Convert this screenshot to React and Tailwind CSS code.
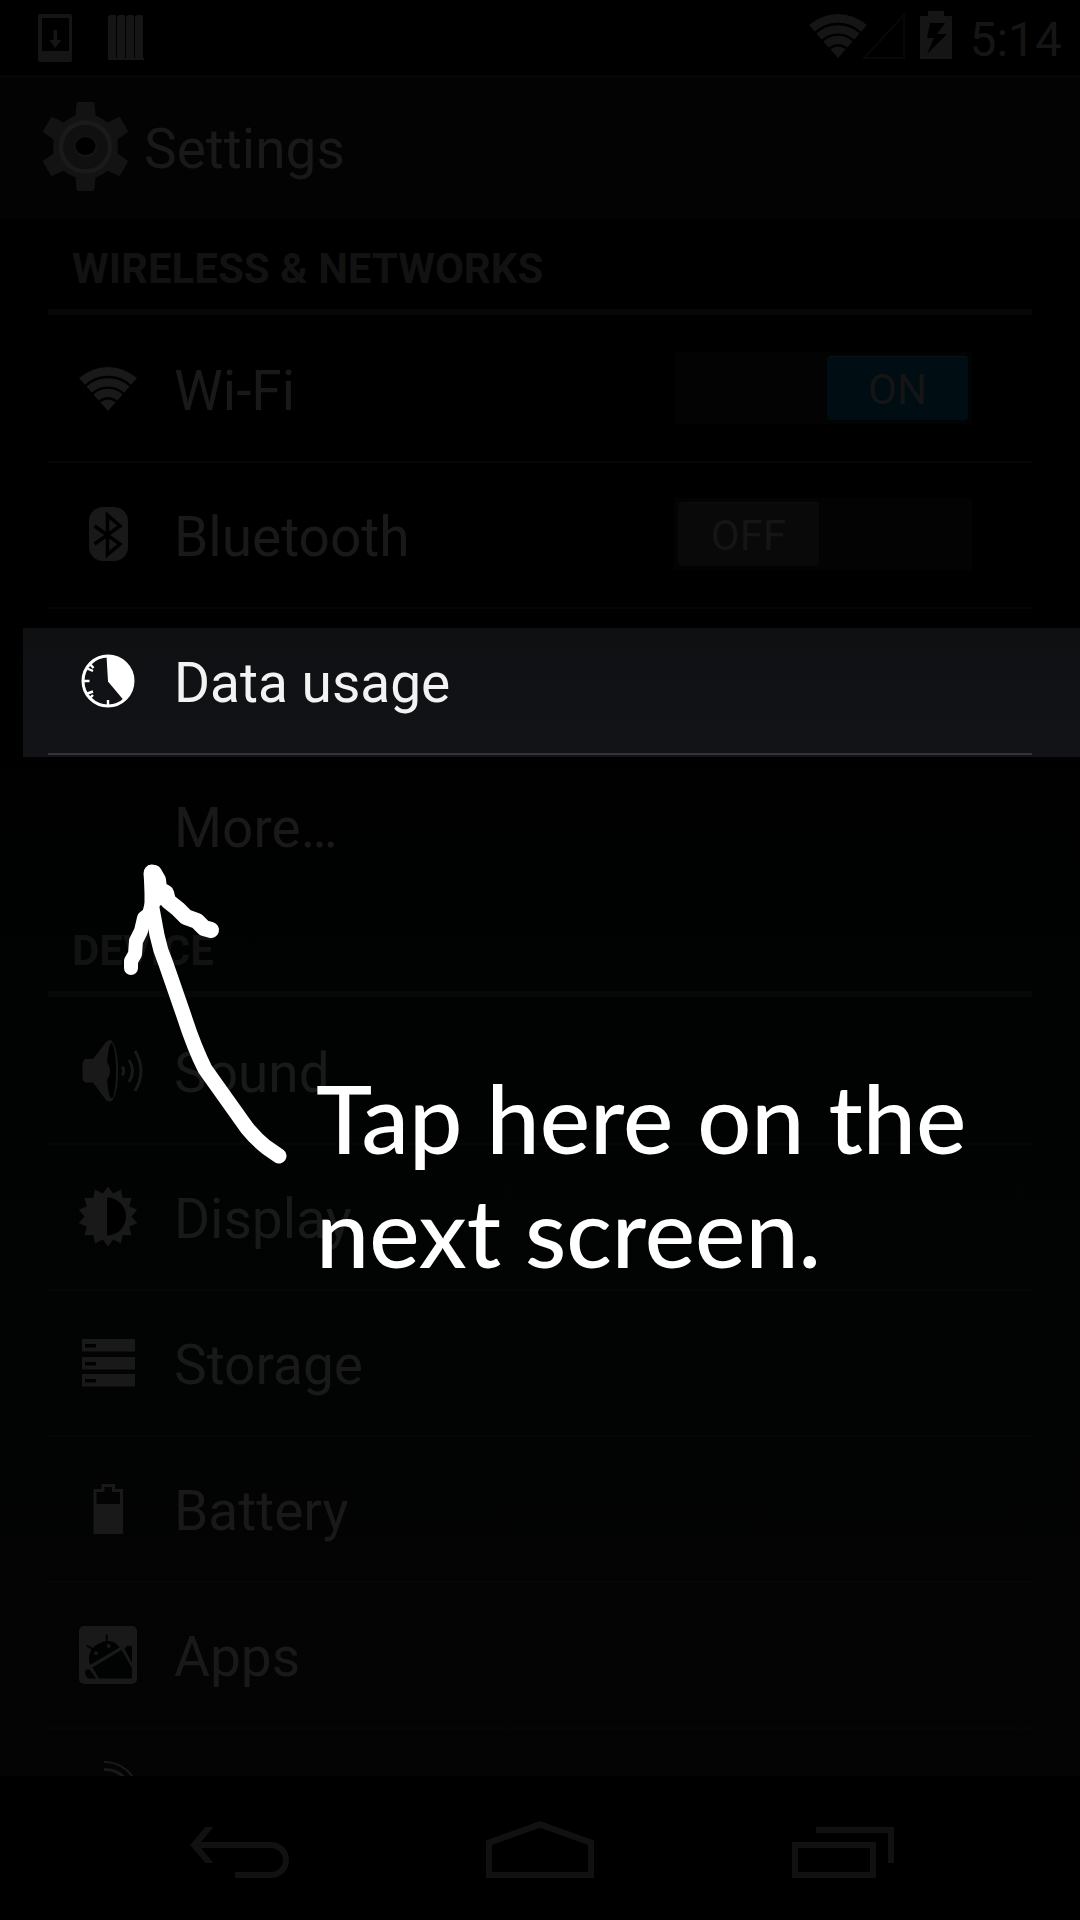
import React from "react";

const INK = "#191919";

function Fan({ color, apexX, apexY }) {
  const arc = (r) =>
    `M${apexX - 0.68 * r} ${apexY - 0.75 * r}A${r} ${r} 0 0 1 ${apexX + 0.68 * r} ${apexY - 0.75 * r}`;
  return (
    <g>
      <path d={`M${apexX} ${apexY}L${apexX - 29} ${apexY - 33}A44 44 0 0 1 ${apexX + 29} ${apexY - 33}Z`} fill={color} />
      <g fill="none" stroke="#000" strokeWidth="2.4">
        <path d={arc(33.5)} />
        <path d={arc(23)} />
        <path d={arc(12.5)} />
      </g>
    </g>
  );
}

function Icon({ children }) {
  return (
    <svg aria-hidden="true" viewBox="0 0 72 72" className="size-[72px] shrink-0 overflow-visible">
      {children}
    </svg>
  );
}

const WifiIcon = () => (
  <Icon>
    <Fan color={INK} apexX={36} apexY={58} />
  </Icon>
);

const BluetoothIcon = () => (
  <Icon>
    <rect x="17" y="8" width="39" height="54" rx="14" fill={INK} />
    <path d="M22.500 27L48 45L35.500 55.500V16L48 27L22.500 45" fill="none" stroke="#000" strokeWidth="3.500" />
  </Icon>
);

const DataUsageIcon = () => (
  <Icon>
    <circle cx="36" cy="36" r="25" fill="none" stroke="#fff" strokeWidth="3" />
    <path d="M34.500 11A25 25 0 0 1 51.500 55L36 36.500Z" fill="#fff" />
    <g stroke="#fff" strokeWidth="2.400">
      <path d="M36 62V55M10 36H17.500M14 49L21 46.500M14 23L21 26M18 53L21 50M18 19L21.500 23" />
    </g>
  </Icon>
);

const SoundIcon = () => (
  <Icon>
    <path d="M13 24H21L34 7Q36 5 39 5Q46 12 46 36T39 66.500Q36 67 34 65L21 47.500H13Q10.500 46 10.500 42V30Q10.500 26 13 24Z" fill={INK} />
    <ellipse cx="39.500" cy="35.800" rx="4.500" ry="27.500" fill="#000" />
    <path d="M33 26Q38 29 38 36T33 46Z" fill={INK} />
    <g fill="none" stroke={INK} strokeWidth="3">
      <path d="M50 31.500Q53.500 36 50 40.500" />
      <path d="M57 25Q64 36 57 47" />
      <path d="M63 16Q75 36 63 56" />
    </g>
  </Icon>
);

const sun = Array.from({ length: 28 }, (_, i) => {
  const a = (i * Math.PI) / 14;
  const r = i % 2 ? 23.5 : 30;
  return `${(36 + r * Math.sin(a)).toFixed(1)},${(35.5 - r * Math.cos(a)).toFixed(1)}`;
}).join(" ");

const DisplayIcon = () => (
  <Icon>
    <polygon points={sun} fill={INK} />
    <path d="M35 16.500A19 19 0 0 1 35 54.500Z" fill="#000" />
  </Icon>
);

const StorageIcon = () => (
  <Icon>
    {[12, 30, 47].map((y) => (
      <g key={y}>
        <rect x="10" y={y} width="53" height="12.500" fill={INK} />
        <rect x="13" y={y + 5} width="11" height="3.500" fill="#000" />
      </g>
    ))}
  </Icon>
);

const BatteryIcon = () => (
  <Icon>
    <path d="M23 59.500V17.500H31V12.500H41.500V17.500H49.500V59.500Z" fill="none" stroke={INK} strokeWidth="3" />
    <rect x="22" y="31" width="29" height="30" fill={INK} />
  </Icon>
);

const AppsIcon = () => (
  <Icon>
    <rect x="7" y="7" width="58" height="58" rx="5" fill={INK} />
    <path d="M18 46Q14 31 27 24.500T47.500 28.500Z" fill="#010202" />
    <path d="M34.700 15.500V23M14.700 26.500L23 31.500" stroke="#010202" strokeWidth="2" />
    <circle cx="36.700" cy="27" r="2" fill={INK} />
    <circle cx="24" cy="34.300" r="2" fill={INK} />
    <path d="M20.500 48.500L49.500 31L60 49V59.500H27Z" fill="#010202" />
    <path d="M52.500 30Q55 25 60 27.500V44Z" fill="#010202" />
    <path d="M18 51L24 59.500H16Q11 54 14 51Q16 49.500 18 51Z" fill="#010202" />
  </Icon>
);

const LocationIcon = () => (
  <Icon>
    <g fill="none" stroke={INK}>
      <path d="M32 -3A34 34 0 0 1 62 14" strokeWidth="2" />
      <path d="M32 4.500A27 27 0 0 1 55 16" strokeWidth="3" />
    </g>
  </Icon>
);

function StatusBar() {
  return (
    <div className="flex h-[75px] shrink-0 items-start bg-black pl-9 pr-[18px] text-[#151515]">
      <svg aria-hidden="true" viewBox="0 0 108 72" className="h-[72px] w-[108px]">
        <path fillRule="evenodd" d="M4 14H34Q36 14 36 16V60Q36 62 34 62H4Q2 62 2 60V16Q2 14 4 14ZM6 18V51H33V18Z" fill="currentColor" />
        <path d="M17.500 30H21V40H25.500L19 48L13.500 40H17.500Z" fill="currentColor" />
        <g fill="currentColor">
          {[72, 81, 90, 99].map((x) => (
            <path key={x} d={`M${x} 17L${x + 2} 15H${x + 7}L${x + 8} 16V58H${x + 9}V60H${x}Z`} />
          ))}
        </g>
      </svg>
      <div className="ml-auto flex items-start">
        <svg aria-hidden="true" viewBox="0 0 144 72" className="h-[72px] w-[144px]">
          <Fan color="#151515" apexX={29} apexY={58} />
          <path d="M55 58L95 15V58Z" fill="none" stroke="#080808" strokeWidth="2" />
          <path d="M111 16H119V11H135V16H143V59H111Z" fill="currentColor" />
          <path d="M121 23H136L128 34H138L118 54L125 38H118Z" fill="#000" />
        </svg>
        <time className="ml-4 mt-3 text-[48px] leading-[56px]">5:14</time>
      </div>
    </div>
  );
}

function Header() {
  return (
    <header className="flex h-36 shrink-0 items-center gap-3 border-t-[3px] border-[#060606] bg-[#030303] pl-9">
      <svg aria-hidden="true" viewBox="0 1 96 96" className="size-24 shrink-0">
        <g fill="#131313">
          {[0, 60, 120, 180, 240, 300].map((a) => (
            <path key={a} d="M42 2H57Q58.500 2 58.500 4L60 20H39L40.500 4Q40.500 2 42 2Z" transform={`rotate(${a} 49.500 46.500)`} />
          ))}
          <circle cx="49.500" cy="46.500" r="32.500" />
        </g>
        <circle cx="49.500" cy="47" r="24.500" fill="#101010" stroke="#1a1a1a" strokeWidth="4.500" />
        <ellipse cx="49.500" cy="46.500" rx="11.500" ry="11" fill="#141414" />
        <ellipse cx="49.500" cy="46" rx="10" ry="9" fill="#000" />
      </svg>
      <h1 className="text-[55px] leading-[64px] text-[#191919]">Settings</h1>
    </header>
  );
}

function Category({ children }) {
  return (
    <h2 className="mx-12 mb-0.5 flex h-24 items-center border-b-[6px] border-[#070707] pl-6 pt-2.5 text-[42px] font-bold leading-[48px] text-[#121212]">
      {children}
    </h2>
  );
}

const ROW = "relative mx-12 flex h-[146px] items-center border-b-2 pl-6 text-[55px] leading-[64px]";
const LABEL = "ml-[30px] pt-1";

function Row({ icon, children }) {
  return (
    <a href="#" className={`${ROW} border-[#060606] text-[#191919]`}>
      {icon}
      <span className={LABEL}>{children}</span>
    </a>
  );
}

function SwitchRow({ icon, name, on }) {
  return (
    <label className={`${ROW} border-[#060606] text-[#191919]`}>
      {icon}
      <span className={LABEL}>{name}</span>
      <input type="checkbox" role="switch" defaultChecked={on} className="peer sr-only" />
      <span
        aria-hidden="true"
        className="mb-0.5 ml-auto mr-[60px] flex h-[72px] w-[298px] bg-[#030303] p-1 text-[42px] text-[#151515] peer-checked:justify-end"
      >
        {on ? (
          <span className="flex h-16 w-[141px] items-center justify-center rounded-sm border-t border-[#04151b] bg-[#000d12] pt-0.5">ON</span>
        ) : (
          <span className="flex h-16 w-[141px] items-center justify-center rounded-sm border-t border-[#0d0d0d] bg-[#090909] pt-0.5">OFF</span>
        )}
      </span>
    </label>
  );
}

function Hint() {
  return (
    <>
      <svg
        aria-hidden="true"
        viewBox="120 860 180 310"
        className="pointer-events-none absolute left-[120px] top-[641px] h-[310px] w-[180px]"
        fill="none"
        stroke="#fff"
        strokeWidth="15"
        strokeLinecap="round"
        strokeLinejoin="round"
      >
        <path d="M152 873V908L157 935Q160 950 166 964L184 1016Q194 1047 205 1069L247 1128Q256 1139 266 1147L279 1156" />
        <path d="M154 873L158 880L159 889L166 893L168 901L178 909L186 917L197 921L204 928L211 930" strokeWidth="16" />
        <path d="M152 903L149 914L144 918L141 931L136 941L135 954L131 961V968" strokeWidth="14" />
        <path d="M152 873L154 900" strokeWidth="17" />
      </svg>
      <p className="pointer-events-none absolute left-[316px] top-[841px] whitespace-nowrap font-['Lato',sans-serif] text-[95px] font-medium leading-[114px] text-white">
        Tap here on the
        <br />
        next screen.
      </p>
    </>
  );
}

function NavBar() {
  const button = "flex flex-1 items-center justify-center";
  const art = "h-[72px] w-[120px]";
  return (
    <nav className="flex h-36 shrink-0 bg-black px-[90px] text-[#111]">
      <button type="button" aria-label="Back" className={button}>
        <svg viewBox="0 0 120 72" className={art}>
          <path d="M16 33H91A15 15 0 0 1 91 63H55" fill="none" stroke="currentColor" strokeWidth="6" />
          <path d="M10 33L25.500 15H33.500L18.500 33L33.500 51H25.500Z" fill="currentColor" />
        </svg>
      </button>
      <button type="button" aria-label="Home" className={button}>
        <svg viewBox="0 0 120 72" className={art}>
          <path fillRule="evenodd" d="M60 9L114 28.500V66H6V28.500ZM60 15.700L12 33V60H108V33Z" fill="currentColor" />
        </svg>
      </button>
      <button type="button" aria-label="Recent apps" className={button}>
        <svg viewBox="0 0 120 72" className={art}>
          <path fillRule="evenodd" d="M12 30H96V66H12ZM18 36V60H90V36Z" fill="currentColor" />
          <path d="M36 15H114V51H108V21H36Z" fill="currentColor" />
        </svg>
      </button>
    </nav>
  );
}

export default function App() {
  return (
    <div className="flex h-screen flex-col overflow-hidden bg-black font-['Roboto',sans-serif]">
      <StatusBar />
      <Header />
      <main className="relative min-h-0 flex-1 overflow-hidden bg-linear-to-b from-black via-[#010202] to-[#040404]">
        <section>
          <Category>WIRELESS &amp; NETWORKS</Category>
          <SwitchRow icon={<WifiIcon />} name="Wi-Fi" on />
          <SwitchRow icon={<BluetoothIcon />} name="Bluetooth" />
          <a href="#" className={`${ROW} isolate border-transparent text-[#f3f3f3]`}>
            <span
              aria-hidden="true"
              className="absolute -bottom-1 -left-[25px] -right-12 top-[19px] -z-10 bg-linear-to-b from-[#0f1012] to-[#121317]"
            />
            <span aria-hidden="true" className="absolute inset-x-0 -bottom-0.5 h-0.5 bg-[#323437]" />
            <DataUsageIcon />
            <span className={LABEL}>Data usage</span>
          </a>
          <a href="#" className={`${ROW} border-transparent text-[#191919]`}>
            <span className="ml-[102px] pt-0.5">More…</span>
          </a>
        </section>
        <section>
          <Category>DEVICE</Category>
          <Row icon={<SoundIcon />}>Sound</Row>
          <Row icon={<DisplayIcon />}>Display</Row>
          <Row icon={<StorageIcon />}>Storage</Row>
          <Row icon={<BatteryIcon />}>Battery</Row>
          <Row icon={<AppsIcon />}>Apps</Row>
          <a href="#" aria-label="Location" className={`${ROW} border-[#060606]`}>
            <LocationIcon />
          </a>
        </section>
        <Hint />
      </main>
      <NavBar />
    </div>
  );
}
